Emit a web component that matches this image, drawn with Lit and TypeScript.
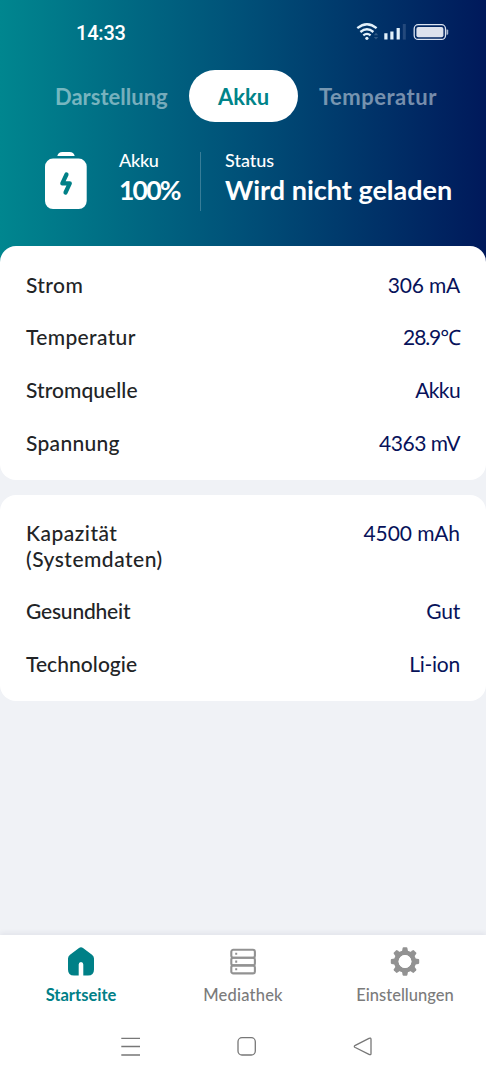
import { LitElement, html, css, svg } from "lit";
import { customElement, property } from "lit/decorators.js";
import { styleMap } from "lit/directives/style-map.js";

@customElement("status-bar")
class StatusBar extends LitElement {
  static styles = css`
    :host { display: flex; height: 62px; padding: 1px 36px 0 76px; align-items: center; justify-content: space-between; box-sizing: border-box; color: #fff; }
    .time { font: 500 20px/24px Roboto, sans-serif; letter-spacing: -0.2px; padding-top: 2px; }
    .icons { display: block; }
  `;
  render() {
    return html`
      <span class="time">14:33</span>
      <svg class="icons" width="94" height="20" viewBox="356 22 94 20" fill="none">
        <g stroke="#e3f1fb" stroke-width="2.3">
          <path d="M357.3 28.2Q367 20.2 376.6 28.2" />
          <path d="M360.4 32Q367 26.6 373.4 32" />
          <path d="M363.3 35.4Q367 32.4 370.6 35.4" />
        </g>
        <circle cx="366.9" cy="38.3" r="1.6" fill="#e3f1fb" />
        <path d="M373.8 35.3L376 32.8L378.2 35.3ZM373.8 37L376 39.5L378.2 37Z" fill="#2f5884" />
        <path d="M384.3 33.3h3.2v6.300h-3.200zM390.300 31.600h3.200v8h-3.200zM396.600 28h3.200v11.600h-3.200z" fill="#e3f1fb" />
        <path d="M402.800 24h3v15.600h-3z" fill="#24497c" />
        <rect x="414.200" y="24.700" width="31.300" height="14.700" rx="4" stroke="#dbe4f1" stroke-width="1.300" />
        <rect x="416.400" y="26.900" width="27" height="10.300" rx="2" fill="#dde2ed" />
        <path d="M446.500 29.500h0.700q1 0 1 1v3.200q0 1-1 1h-0.700z" fill="#a9b7d0" />
      </svg>
    `;
  }
}

@customElement("tab-strip")
class TabStrip extends LitElement {
  static styles = css`
    :host { display: grid; grid-template-columns: 134px 109px 131px; padding: 8px 0 0 55px; height: 60px; box-sizing: border-box; font-size: 22px; font-weight: 700; line-height: 50px; color: rgba(255, 255, 255, 0.47); white-space: nowrap; }
    span { padding-top: 2px; }
    .active { background: #fff; color: #008489; border-radius: 26px; text-align: center; }
    .last { padding-left: 21px; letter-spacing: 0.5px; }
  `;
  render() {
    return html`<span>Darstellung</span><span class="active">Akku</span><span class="last">Temperatur</span>`;
  }
}

@customElement("battery-summary")
class BatterySummary extends LitElement {
  static styles = css`
    :host { display: flex; padding: 30px 0 0 45px; color: #fff; white-space: nowrap; }
    .battery { flex: none; margin-right: 32px; }
    .cell { height: 59px; box-sizing: border-box; }
    .charge { width: 82px; border-right: 1px solid rgba(255, 255, 255, 0.22); margin-right: 24px; }
    .label { font-size: 18px; line-height: 16px; font-weight: 500; }
    .charge .label { letter-spacing: -0.3px; }
    .value { font-size: 27px; line-height: 30px; font-weight: 700; margin-top: 7px; }
    .charge .value { font-size: 26.5px; letter-spacing: -1.8px; }
  `;
  render() {
    return html`
      <svg class="battery" width="42" height="57" viewBox="0 0 42 57">
        <path d="M12.300 4q1-4 5-4h7.400q4 0 5 4z" fill="#fff" />
        <rect y="6.600" width="41.700" height="50.400" rx="8" fill="#fff" />
        <path d="M21.500 22.500L17.300 31.300H24.800L20.500 40.500" fill="none" stroke="#008087" stroke-width="4.200" stroke-linecap="round" stroke-linejoin="round" />
      </svg>
      <div class="cell charge"><div class="label">Akku</div><div class="value">100%</div></div>
      <div class="cell"><div class="label">Status</div><div class="value">Wird nicht geladen</div></div>
    `;
  }
}

interface Row {
  name: string;
  value: string;
  nameTracking: number;
  valueTracking: number;
}

const row = (name: string, value: string, nameTracking: number, valueTracking: number): Row => ({ name, value, nameTracking, valueTracking });

@customElement("info-card")
class InfoCard extends LitElement {
  @property({ attribute: false }) rows: Row[] = [];
  static styles = css`
    :host { display: block; background: #fff; border-radius: 16px; padding: 12px 26px 11.5px; }
    .row { display: flex; justify-content: space-between; padding: 13.67px 0; font-size: 21px; line-height: 25.33px; }
    .name { color: #222426; white-space: pre-line; font-weight: 500; }
    .line { display: block; }
    .value { color: #07125a; }
  `;
  render() {
    return this.rows.map(
      (r) => html`<div class="row">
        <span class="name" style=${styleMap({ letterSpacing: `${r.nameTracking}px` })}>${r.name}</span>
        <span class="value" style=${styleMap({ letterSpacing: `${r.valueTracking}px` })}>${r.value}</span>
      </div>`
    );
  }
}

const batteryRows = [
  row("Strom", "306 mA", 0.4, -0.2),
  row("Temperatur", "28.9℃", 0.35, -1.1),
  row("Stromquelle", "Akku", 0.06, -0.6),
  row("Spannung", "4363 mV", 0.3, -0.45),
];
const systemRows = [
  row("Kapazität\n(Systemdaten)", "4500 mAh", 0.5, -0.1),
  row("Gesundheit", "Gut", -0.2, -0.2),
  row("Technologie", "Li-ion", 0.05, -0.25),
];

const cog = Array.from({ length: 8 }, (_, i) => svg`<path d="M-3.200 -9L-2.400 -13.500Q-2.200 -14.200 -1.500 -14.200H1.500Q2.200 -14.200 2.400 -13.500L3.200 -9Z" transform="rotate(${i * 45})" />`);

@customElement("bottom-nav")
class BottomNav extends LitElement {
  static styles = css`
    :host { display: grid; grid-template-columns: repeat(3, 162px); height: 79px; padding-top: 11px; box-sizing: border-box; background: #fff; box-shadow: 0 -2px 5px rgba(40, 40, 90, 0.07); color: #7b7b7b; }
    .item { display: flex; flex-direction: column; align-items: center; gap: 6.5px; font-size: 16.5px; line-height: 22px; font-weight: 500; }
    .item svg { display: block; }
    .on { color: #008087; font-weight: 700; }
    .wide { letter-spacing: 0.2px; }
  `;
  render() {
    return html`
      <div class="item on">
        <svg width="30" height="31" viewBox="0 0 30 31"><path d="M13 2Q15 0.400 17 2L26 8.800Q28 10.300 28 12.500V23.500Q28 29.500 22 29.500H17.300V18.500Q17.300 16 15 16T12.700 18.500V29.500H8Q2 29.500 2 23.500V12.500Q2 10.300 4 8.800Z" fill="currentColor" /></svg>
        <span>Startseite</span>
      </div>
      <div class="item">
        <svg width="30" height="31" viewBox="0 0 30 31" fill="none" stroke="#929292" stroke-width="2.100">
          <rect x="3.300" y="3.800" width="23.600" height="8" rx="2" /><rect x="3.300" y="11.800" width="23.600" height="7.600" rx="2" /><rect x="3.300" y="19.400" width="23.600" height="8" rx="2" />
          <path d="M7.200 7.800h2M7.200 15.600h2M7.200 23.300h2" />
        </svg>
        <span class="wide">Mediathek</span>
      </div>
      <div class="item">
        <svg width="30" height="31" viewBox="-15 -15.500 30 31" fill="#929292"><circle r="8.700" fill="none" stroke="#929292" stroke-width="4.600" />${cog}<circle r="6.400" fill="#fff" /></svg>
        <span>Einstellungen</span>
      </div>
    `;
  }
}

@customElement("system-keys")
class SystemKeys extends LitElement {
  static styles = css`
    :host { display: flex; flex: none; justify-content: space-between; padding: 21px 112px 0 120px; height: 66px; box-sizing: border-box; background: #fff; }
  `;
  render() {
    return html`
      <svg width="22" height="23" viewBox="0 0 22 23" stroke="#777" stroke-width="1.300"><path d="M1.300 3.300H20M1.300 11.500H20M1.300 20H20" /></svg>
      <svg width="22" height="23" viewBox="0 0 22 23" fill="none" stroke="#777" stroke-width="1.300"><rect x="2" y="2.700" width="17.300" height="17.300" rx="4" /></svg>
      <svg width="22" height="23" viewBox="0 0 22 23" fill="none" stroke="#777" stroke-width="1.300"><path d="M3.300 10.300L17 3.400Q19 2.500 19 4.300V18.400Q19 20.300 17 19.300L3.300 12.500Q1.300 11.400 3.300 10.300Z" /></svg>
    `;
  }
}

@customElement("app-root")
class AppRoot extends LitElement {
  static styles = css`
    :host { display: flex; flex-direction: column; width: 486px; height: 1080px; overflow: hidden; background: #f0f2f6; font-family: Lato, "Noto Sans", sans-serif; }
    header { height: 266px; flex: none; background: linear-gradient(90deg, #00868f, #005078 50%, #00195b); }
    main { flex: 1; display: flex; flex-direction: column; gap: 14.5px; margin-top: -20px; }
  `;
  render() {
    return html`
      <header><status-bar></status-bar><tab-strip></tab-strip><battery-summary></battery-summary></header>
      <main>
        <info-card .rows=${batteryRows}></info-card>
        <info-card .rows=${systemRows}></info-card>
      </main>
      <bottom-nav></bottom-nav>
      <system-keys></system-keys>
    `;
  }
}
